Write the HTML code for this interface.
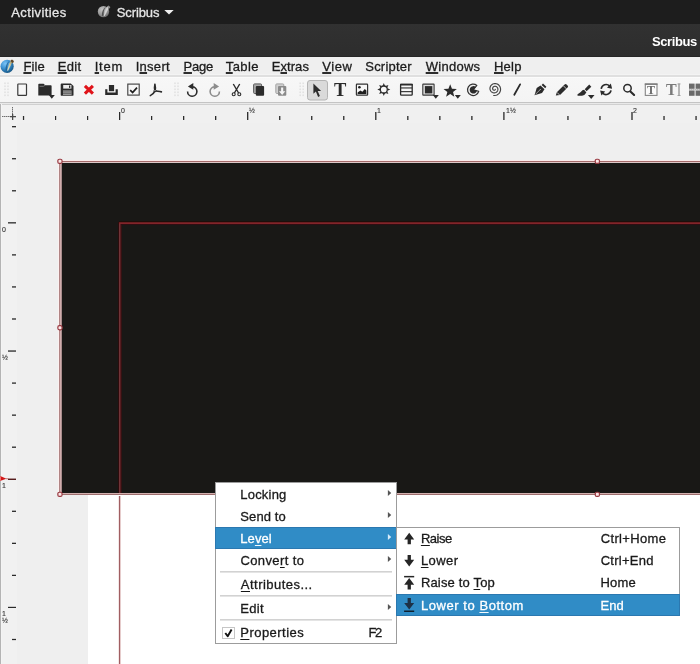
<!DOCTYPE html>
<html lang="en"><head><meta charset="utf-8"><title>Scribus</title>
<style>
html,body{margin:0;padding:0;}
body{width:700px;height:664px;overflow:hidden;position:relative;background:#efefef;font-family:"Liberation Sans", sans-serif;}
#root{position:absolute;left:0;top:0;width:700px;height:664px;overflow:hidden;will-change:transform;}
#root div,#root span,#root svg{position:absolute;}
.ti{font-family:"Liberation Serif",serif;white-space:pre;}
.t{white-space:pre;line-height:16px;font-family:"Liberation Sans", sans-serif;-webkit-text-stroke:0.3px currentColor;}
.t.rl{-webkit-text-stroke:0.12px currentColor;}
.t.b{-webkit-text-stroke:0;}
.t u{text-decoration:underline;text-decoration-thickness:2px;text-underline-offset:1px;text-decoration-skip-ink:none;text-decoration-color:rgba(10,10,10,.85);}
.t.m u{text-decoration-thickness:1px;text-underline-offset:1.5px;text-decoration-color:rgba(10,10,10,.95);}
.t.w u{text-decoration-thickness:1px;text-underline-offset:1.5px;text-decoration-color:rgba(255,255,255,.95);}
</style></head>
<body><div id="root">
<div style="left:0px;top:0px;width:700px;height:664px;background:#efefef;"></div>
<div style="left:0px;top:0px;width:700px;height:24px;background:#1d1d1d;"></div>
<div style="left:0px;top:24px;width:700px;height:33px;background:#2f2f2f;background:linear-gradient(#313131,#2d2d2d);"></div>
<div style="left:0px;top:56px;width:700px;height:1px;background:#262626;"></div>
<div style="left:0px;top:57px;width:700px;height:19px;background:#efefef;"></div>
<div style="left:0px;top:74px;width:700px;height:1px;background:#f3f3f3;"></div>
<div style="left:0px;top:75px;width:700px;height:2px;background:#dfdfdf;"></div>
<div style="left:0px;top:77px;width:700px;height:25px;background:#f6f6f6;background:linear-gradient(#f7f7f7,#f4f4f4);"></div>
<div style="left:0px;top:77px;width:700px;height:1px;background:#fbfbfb;"></div>
<div style="left:0px;top:102px;width:700px;height:1px;background:#c4c4c4;"></div>
<div style="left:0px;top:103px;width:700px;height:1px;background:#e9e9e9;"></div>
<div style="left:0px;top:104px;width:700px;height:1px;background:#d0d0d0;"></div>
<div style="left:0px;top:105px;width:700px;height:18px;background:#f0f0f0;"></div>
<div style="left:0px;top:105px;width:17px;height:559px;background:#f1f1f1;"></div>
<div style="left:0px;top:104px;width:1px;height:560px;background:#b4b4b4;"></div>
<div style="left:1px;top:104px;width:1px;height:560px;background:#f4f4f4;"></div>
<span class="t " style="left:11.27px;top:5.00px;font-size:13px;color:#e6e6e6;font-weight:400;letter-spacing:0.399px">Activities</span>
<span class="t " style="left:116.75px;top:5.00px;font-size:13px;color:#e6e6e6;font-weight:400;letter-spacing:-0.114px">Scribus</span>
<svg style="left:163px;top:9px" width="12" height="7" viewBox="0 0 12 7"><path d="M1.3 1 L10.7 1 L6 5.6 Z" fill="#f0f0f0"/></svg>
<svg style="left:96px;top:4px" width="16" height="16" viewBox="96 4 16 16">
<defs><radialGradient id="gi" cx=".38" cy=".32" r=".8"><stop offset="0" stop-color="#c4c4c4"/><stop offset=".55" stop-color="#9a9a9a"/><stop offset="1" stop-color="#5c5c5c"/></radialGradient></defs>
<circle cx="103.5" cy="11.6" r="5.7" fill="url(#gi)"/>
<path d="M101.9 15.8 C101.6 12.4 103 9 105.8 6.8 C104 9.6 103.4 12.6 103.6 15.9 Z" fill="#3c3c3c" opacity=".8"/>
<path d="M103.6 15.9 L105.6 9.6 L107.4 6.4 L109 7.2 L108 9.8 L104.6 16 Z" fill="#d2d2d2"/>
<path d="M107 6.4 L108.6 5.5 L110.3 6.9 L109.9 8.2 L108.8 8.5 Z" fill="#8e8e8e"/>
</svg>
<span class="t b" style="left:652.06px;top:34.00px;font-size:13px;color:#ffffff;font-weight:700;letter-spacing:-0.418px">Scribus</span>
<svg style="left:0px;top:56px" width="20" height="20" viewBox="0 56 20 20">
<defs><radialGradient id="lg" cx=".36" cy=".3" r=".78"><stop offset="0" stop-color="#7cc4f6"/><stop offset=".45" stop-color="#3f94d4"/><stop offset=".8" stop-color="#1f679c"/><stop offset="1" stop-color="#164e78"/></radialGradient>
<linearGradient id="pg" x1="0" y1="1" x2="1" y2="0"><stop offset="0" stop-color="#e8e6d0"/><stop offset=".6" stop-color="#cfc79a"/><stop offset="1" stop-color="#8a7a4a"/></linearGradient></defs>
<circle cx="7.1" cy="66.3" r="6.6" fill="url(#lg)"/>
<path d="M5.6 70.6 C5.2 66.6 6.6 62.8 9.6 60.8 C7.6 63.6 7 66.8 7.2 70.6 Z" fill="#1a5a8c" opacity=".75"/>
<path d="M7.1 70.6 L9.3 63.4 L10.9 60.6 L12.4 61.4 L11.4 64 L8.1 70.8 Z" fill="url(#pg)"/>
<path d="M10.5 60.5 L12 59.5 L13.9 61 L13.5 62.6 L12.2 62.9 Z" fill="#5e4424"/>
</svg>
<span class="t " style="left:23.39px;top:59.00px;font-size:13px;color:#1c1c1c;font-weight:400;letter-spacing:0.154px"><u>F</u>ile</span>
<span class="t " style="left:57.69px;top:59.00px;font-size:13px;color:#1c1c1c;font-weight:400;letter-spacing:0.373px"><u>E</u>dit</span>
<span class="t " style="left:94.64px;top:59.00px;font-size:13px;color:#1c1c1c;font-weight:400;letter-spacing:0.809px"><u>I</u>tem</span>
<span class="t " style="left:135.64px;top:59.00px;font-size:13px;color:#1c1c1c;font-weight:400;letter-spacing:0.293px">I<u>n</u>sert</span>
<span class="t " style="left:183.49px;top:59.00px;font-size:13px;color:#1c1c1c;font-weight:400;letter-spacing:-0.215px"><u>P</u>age</span>
<span class="t " style="left:225.84px;top:59.00px;font-size:13px;color:#1c1c1c;font-weight:400;letter-spacing:0.376px"><u>T</u>able</span>
<span class="t " style="left:271.69px;top:59.00px;font-size:13px;color:#1c1c1c;font-weight:400;letter-spacing:0.078px">E<u>x</u>tras</span>
<span class="t " style="left:322.25px;top:59.00px;font-size:13px;color:#1c1c1c;font-weight:400;letter-spacing:0.535px"><u>V</u>iew</span>
<span class="t " style="left:365.25px;top:59.00px;font-size:13px;color:#1c1c1c;font-weight:400;letter-spacing:0.213px">Scripter</span>
<span class="t " style="left:425.71px;top:59.00px;font-size:13px;color:#1c1c1c;font-weight:400;letter-spacing:0.262px"><u>W</u>indows</span>
<span class="t " style="left:493.99px;top:59.00px;font-size:13px;color:#1c1c1c;font-weight:400;letter-spacing:0.207px"><u>H</u>elp</span>
<svg style="left:0;top:76px" width="700" height="28" viewBox="0 76 700 28"><rect x="4.2" y="82.5" width="1.6" height="1.6" fill="#e2e2e2"/><rect x="7.2" y="82.5" width="1.6" height="1.6" fill="#e2e2e2"/><rect x="4.2" y="85.5" width="1.6" height="1.6" fill="#e2e2e2"/><rect x="7.2" y="85.5" width="1.6" height="1.6" fill="#e2e2e2"/><rect x="4.2" y="88.5" width="1.6" height="1.6" fill="#e2e2e2"/><rect x="7.2" y="88.5" width="1.6" height="1.6" fill="#e2e2e2"/><rect x="4.2" y="91.5" width="1.6" height="1.6" fill="#e2e2e2"/><rect x="7.2" y="91.5" width="1.6" height="1.6" fill="#e2e2e2"/><rect x="4.2" y="94.5" width="1.6" height="1.6" fill="#e2e2e2"/><rect x="7.2" y="94.5" width="1.6" height="1.6" fill="#e2e2e2"/><rect x="174.2" y="82.5" width="1.6" height="1.6" fill="#e2e2e2"/><rect x="177.2" y="82.5" width="1.6" height="1.6" fill="#e2e2e2"/><rect x="174.2" y="85.5" width="1.6" height="1.6" fill="#e2e2e2"/><rect x="177.2" y="85.5" width="1.6" height="1.6" fill="#e2e2e2"/><rect x="174.2" y="88.5" width="1.6" height="1.6" fill="#e2e2e2"/><rect x="177.2" y="88.5" width="1.6" height="1.6" fill="#e2e2e2"/><rect x="174.2" y="91.5" width="1.6" height="1.6" fill="#e2e2e2"/><rect x="177.2" y="91.5" width="1.6" height="1.6" fill="#e2e2e2"/><rect x="174.2" y="94.5" width="1.6" height="1.6" fill="#e2e2e2"/><rect x="177.2" y="94.5" width="1.6" height="1.6" fill="#e2e2e2"/><rect x="299.4" y="82.5" width="1.6" height="1.6" fill="#e2e2e2"/><rect x="302.4" y="82.5" width="1.6" height="1.6" fill="#e2e2e2"/><rect x="299.4" y="85.5" width="1.6" height="1.6" fill="#e2e2e2"/><rect x="302.4" y="85.5" width="1.6" height="1.6" fill="#e2e2e2"/><rect x="299.4" y="88.5" width="1.6" height="1.6" fill="#e2e2e2"/><rect x="302.4" y="88.5" width="1.6" height="1.6" fill="#e2e2e2"/><rect x="299.4" y="91.5" width="1.6" height="1.6" fill="#e2e2e2"/><rect x="302.4" y="91.5" width="1.6" height="1.6" fill="#e2e2e2"/><rect x="299.4" y="94.5" width="1.6" height="1.6" fill="#e2e2e2"/><rect x="302.4" y="94.5" width="1.6" height="1.6" fill="#e2e2e2"/><rect x="17.8" y="84" width="8.7" height="11.4" rx=".6" fill="#f7f7f7" stroke="#3a3a3a" stroke-width="1.2"/><path d="M38.3 84.6 Q38.3 83.8 39.1 83.8 L43.6 83.8 L45.2 85.2 L50.8 85.2 Q51.6 85.2 51.6 86 L51.6 95.5 L38.3 95.5 Z" fill="#2b2b2b"/><path d="M39.6 86.3 L43.4 86.3 L45 85.3" fill="none" stroke="#8a8a8a" stroke-width=".8"/><path d="M48.8 95.1 L54.8 95.1 L51.8 98.7 Z" fill="#2b2b2b"/><path d="M61.6 83.5 L70.8 83.5 L73.5 86 L73.5 94.9 Q73.5 95.8 72.6 95.8 L61.6 95.8 Q60.7 95.8 60.7 94.9 L60.7 84.4 Q60.7 83.5 61.6 83.5 Z" fill="#2b2b2b"/><rect x="63.2" y="85" width="8.2" height="3.6" fill="#e9e9e9"/><rect x="69" y="85.5" width="1.3" height="2.4" fill="#2b2b2b"/><rect x="63" y="90.4" width="8.6" height="4.6" fill="#9a9a9a"/><rect x="63" y="91.6" width="8.6" height=".7" fill="#5a5a5a"/><rect x="63" y="93.2" width="8.6" height=".7" fill="#5a5a5a"/><path d="M84.9 85.9 L92.9 93.7 M92.9 85.9 L84.9 93.7" stroke="#e0141a" stroke-width="3.1" stroke-linecap="butt" fill="none"/><rect x="108.9" y="85" width="5.2" height="6.2" fill="#2b2b2b"/><path d="M105.2 89.2 L107.4 89.2 L107.4 92.6 L115.6 92.6 L115.6 89.2 L117.8 89.2 L117.8 94.9 L105.2 94.9 Z" fill="#2b2b2b"/><rect x="127.8" y="84.1" width="11.4" height="11" fill="#f7f7f7" stroke="#444" stroke-width="1.15"/><path d="M130.2 90.2 L132.6 92.6 L137 87.6" fill="none" stroke="#1e1e1e" stroke-width="1.7"/><path d="M154.9 84.2 C155.6 87 155.6 89 155 90.8 C154 93 152.4 94.6 150.3 95.6 M155 90.8 C157 91.2 159 91.4 161.4 91.9 M155 90.8 C154.4 88.6 154.4 86.4 154.9 84.2" fill="none" stroke="#2b2b2b" stroke-width="1.6" stroke-linecap="round"/><circle cx="155" cy="90.7" r="1.5" fill="#2b2b2b"/><circle cx="155" cy="90.6" r=".6" fill="#ddd"/><path d="M192.6 86.9 A4.65 4.65 0 1 1 187.6 91.4" fill="none" stroke="#2b2b2b" stroke-width="1.6"/><path d="M187.9 86.4 L193.3 83 L193.3 89.8 Z" fill="#2b2b2b"/><path d="M214.4 86.9 A4.65 4.65 0 1 0 219.4 91.4" fill="none" stroke="#8c8c8c" stroke-width="1.6"/><path d="M219.1 86.4 L213.7 83 L213.7 89.8 Z" fill="#8c8c8c"/><path d="M233.3 84 L238.6 93 M239.7 84 L234.4 93" stroke="#2b2b2b" stroke-width="1.4" fill="none"/><circle cx="233.7" cy="94.2" r="1.5" fill="none" stroke="#2b2b2b" stroke-width="1.1"/><circle cx="239.3" cy="94.2" r="1.5" fill="none" stroke="#2b2b2b" stroke-width="1.1"/><rect x="253.6" y="83.9" width="8" height="9.6" rx="1" fill="#a8a8a8" stroke="#5c5c5c" stroke-width="1"/><rect x="255.8" y="86" width="8.3" height="9.7" rx="1" fill="#2b2b2b"/><rect x="275.8" y="83.9" width="8" height="9.6" rx="1" fill="#cfcfcf" stroke="#a4a4a4" stroke-width="1"/><rect x="278" y="86" width="8.3" height="9.7" rx="1" fill="#8a8a8a"/><path d="M281.1 87.6 L283.2 87.6 L283.2 91.2 L285.3 91.2 L282.15 94.9 L279 91.2 L281.1 91.2 Z" fill="#f4f4f4"/><rect x="307.5" y="80.5" width="20" height="19.5" rx="2.5" fill="#dadada" stroke="#b4b4b4" stroke-width="1"/><path d="M313.4 83.4 L313.4 93.8 L315.9 91.6 L318.1 96.9 L319.9 96.1 L317.7 90.9 L321.1 90.9 Z" fill="#2b2b2b"/><rect x="356.4" y="84.1" width="11.2" height="11.1" rx=".6" fill="#f7f7f7" stroke="#333" stroke-width="1.2"/><circle cx="359.4" cy="87.2" r="1.3" fill="#1e1e1e"/><path d="M357.6 94 L357.6 92.6 L360.4 90.4 L362.4 91.8 L364.8 89 L366.4 90.6 L366.4 94 Z" fill="#1e1e1e"/><path d="M385.05 85.90 L383.80 83.00 L382.55 85.90 Z M387.23 87.84 L388.40 84.90 L385.46 86.07 Z M387.40 90.75 L390.30 89.50 L387.40 88.25 Z M385.46 92.93 L388.40 94.10 L387.23 91.16 Z M382.55 93.10 L383.80 96.00 L385.05 93.10 Z M380.37 91.16 L379.20 94.10 L382.14 92.93 Z M380.20 88.25 L377.30 89.50 L380.20 90.75 Z M382.14 86.07 L379.20 84.90 L380.37 87.84 Z " fill="#2b2b2b"/><circle cx="383.8" cy="89.5" r="3.5" fill="#f7f7f7" stroke="#2b2b2b" stroke-width="1.3"/><rect x="400.6" y="84.4" width="11.6" height="10.8" rx=".8" fill="#f7f7f7" stroke="#2b2b2b" stroke-width="1.3"/><rect x="400" y="83.8" width="12.8" height="1.7" fill="#2b2b2b"/><rect x="400.6" y="87.4" width="11.6" height="1.1" fill="#2b2b2b"/><rect x="400.6" y="91.1" width="11.6" height="1.1" fill="#2b2b2b"/><rect x="422.8" y="84.1" width="11.3" height="11" rx=".4" fill="#dcdcdc" stroke="#3a3a3a" stroke-width="1.1"/><rect x="424.9" y="86.1" width="7.4" height="7.3" fill="#2b2b2b"/><path d="M432.8 95.1 L438.8 95.1 L435.8 98.7 Z" fill="#2b2b2b"/><path d="M450.20 84.24 L451.96 88.72 L456.86 88.98 L453.05 92.01 L454.31 96.65 L450.20 94.04 L446.09 96.65 L447.35 92.01 L443.54 88.98 L448.44 88.72 Z" fill="#2b2b2b"/><path d="M454.8 95.1 L460.8 95.1 L457.8 98.7 Z" fill="#2b2b2b"/><path d="M473.2 89.8 L478.71 91.28 A5.7 5.7 0 1 1 476.86 85.43 Z" fill="#f0f0f0" stroke="#333" stroke-width="1.2" stroke-linejoin="round"/><path d="M473.4 89.8 L476.97 90.76 A3.7 3.7 0 1 1 475.78 86.97 Z" fill="#2b2b2b"/><path d="M493.67 95.53 L494.82 95.52 L495.94 95.31 L497.00 94.92 L497.96 94.36 L498.80 93.64 L499.49 92.80 L500.02 91.87 L500.38 90.87 L500.56 89.83 L500.56 88.80 L500.38 87.79 L500.04 86.84 L499.54 85.97 L498.90 85.21 L498.16 84.58 L497.33 84.10 L496.44 83.77 L495.51 83.61 L494.59 83.60 L493.69 83.75 L492.85 84.06 L492.08 84.49 L491.40 85.05 L490.85 85.70 L490.42 86.44 L490.12 87.22 L489.97 88.03 L489.97 88.84 L490.10 89.62 L490.36 90.36 L490.74 91.03 L491.22 91.62 L491.78 92.11 L492.42 92.48 L493.09 92.73 L493.79 92.86 L494.48 92.87 L495.16 92.76 L495.79 92.53 L496.36 92.21 L496.86 91.80 L497.27 91.32 L497.58 90.79 L497.79 90.22 L497.90 89.63 L497.90 89.05 L497.81 88.49 L497.62 87.97 L497.35 87.49 L497.01 87.09 L496.61 86.75 L496.17 86.50 L495.70 86.34 L495.23 86.26 L494.76 86.26 L494.31 86.35 L493.90 86.50 L493.53 86.73 L493.22 87.00 L492.96 87.32 L492.78 87.67 L492.66 88.03 L492.61 88.39 L492.63 88.75 L492.70 89.08 L492.83 89.39 L493.01 89.65 L493.22 89.87 L493.46 90.04 L493.72 90.16 L493.98 90.23 L494.24 90.24 L494.48 90.21 L494.70 90.14 L494.89 90.03 L495.05 89.90 L495.18 89.74 L495.26 89.58 L495.31 89.41 L495.32 89.25" fill="none" stroke="#444" stroke-width="1.15" stroke-linecap="round"/><path d="M514.3 94.8 L520.1 84.4" stroke="#2b2b2b" stroke-width="1.8" stroke-linecap="round"/><path d="M534.5 95.3 L536.7 88 L540.5 85.5 L544.5 89.3 L542 93 Z" fill="#2b2b2b"/><path d="M541.6 84.9 L543 83.6 L546.4 86.8 L545.2 88.2 Z" fill="#2b2b2b"/><path d="M535.4 94.4 L540.2 89.6" stroke="#d0d0d0" stroke-width=".7"/><circle cx="540.3" cy="89.5" r=".6" fill="#bdbdbd"/><path d="M555.8 95.6 L556.8 92.2 L564.6 84.6 Q565.6 83.6 566.6 84.6 L567.6 85.6 Q568.6 86.6 567.6 87.6 L560 95 Z" fill="#2b2b2b"/><path d="M563.6 86 L566.6 89 M557 92.4 L559.6 95" stroke="#e4e4e4" stroke-width=".8"/><path d="M589.2 84.6 L591.3 86.7 L586.6 91.3 L584.7 89.2 Z" fill="#2b2b2b"/><path d="M584.1 89.7 L586.4 92.6 Q585.2 95.2 582 95.7 L577.9 95.7 Q576.4 95 578 93.9 Q580.8 92.6 582.4 90.3 Z" fill="#2b2b2b"/><path d="M587.9 95.1 L594.5 95.1 L591.2 98.9 Z" fill="#2b2b2b"/><path d="M601.2 88.8 A5 5 0 0 1 609.6 86" fill="none" stroke="#2b2b2b" stroke-width="1.6"/><path d="M611 90.4 A5 5 0 0 1 602.6 93.2" fill="none" stroke="#2b2b2b" stroke-width="1.6"/><path d="M610.8 83.6 L612.1 88.7 L607 87.7 Z" fill="#2b2b2b"/><path d="M601.4 95.6 L600.1 90.5 L605.2 91.5 Z" fill="#2b2b2b"/><circle cx="627.5" cy="88.2" r="3.7" fill="none" stroke="#2b2b2b" stroke-width="1.5"/><path d="M630.4 91.4 L634.1 95" stroke="#2b2b2b" stroke-width="2.1" stroke-linecap="round"/><rect x="645.3" y="84" width="11.7" height="11.4" fill="#fbfbfb" stroke="#858585" stroke-width="1.1"/><rect x="644.8" y="83.5" width="12.7" height="1.4" fill="#7c7c7c"/><rect x="678.4" y="83.6" width="1.2" height="12.2" fill="#8c8c8c"/><rect x="677.5" y="83.5" width="3" height=".9" fill="#9a9a9a"/><rect x="677.5" y="95" width="3" height=".9" fill="#9a9a9a"/><rect x="689" y="83.6" width="5.6" height="5.2" fill="#6a6a6a"/><rect x="695.6" y="83.6" width="5" height="5.2" fill="#6a6a6a"/><rect x="689" y="90.5" width="5.6" height="5.3" fill="#6a6a6a"/><rect x="695.6" y="90.5" width="5" height="5.3" fill="#6a6a6a"/><path d="M689.4 89.7 L700 89.7" stroke="#7a7a7a" stroke-width="1" stroke-dasharray="1 1"/></svg>
<span class="ti" style="left:333.9px;top:79.5px;font-size:18.5px;line-height:20px;color:#2b2b2b;font-weight:700">T</span>
<span class="ti" style="left:647.1px;top:83px;font-size:12px;line-height:14px;color:#6a6a6a;font-weight:700">T</span>
<span class="ti" style="left:665.9px;top:81px;font-size:16px;line-height:17px;color:#7a7a7a;font-weight:700">T</span>
<div style="left:22px;top:116px;width:1px;height:4px;background:rgba(42,42,42,0.10);"></div>
<div style="left:23px;top:116px;width:1px;height:4px;background:rgba(42,42,42,1.00);"></div>
<div style="left:24px;top:116px;width:1px;height:4px;background:rgba(42,42,42,0.16);"></div>
<div style="left:55px;top:116px;width:1px;height:4px;background:rgba(42,42,42,1.00);"></div>
<div style="left:56px;top:116px;width:1px;height:4px;background:rgba(42,42,42,0.18);"></div>
<div style="left:87px;top:116px;width:1px;height:4px;background:rgba(42,42,42,1.00);"></div>
<div style="left:88px;top:116px;width:1px;height:4px;background:rgba(42,42,42,0.21);"></div>
<div style="left:119px;top:112px;width:1px;height:8px;background:rgba(42,42,42,1.00);"></div>
<div style="left:120px;top:112px;width:1px;height:8px;background:rgba(42,42,42,0.24);"></div>
<div style="left:151px;top:116px;width:1px;height:4px;background:rgba(42,42,42,1.00);"></div>
<div style="left:152px;top:116px;width:1px;height:4px;background:rgba(42,42,42,0.26);"></div>
<div style="left:183px;top:116px;width:1px;height:4px;background:rgba(42,42,42,1.00);"></div>
<div style="left:184px;top:116px;width:1px;height:4px;background:rgba(42,42,42,0.29);"></div>
<div style="left:215px;top:116px;width:1px;height:4px;background:rgba(42,42,42,1.00);"></div>
<div style="left:216px;top:116px;width:1px;height:4px;background:rgba(42,42,42,0.31);"></div>
<div style="left:247px;top:112px;width:1px;height:8px;background:rgba(42,42,42,0.97);"></div>
<div style="left:248px;top:112px;width:1px;height:8px;background:rgba(42,42,42,0.34);"></div>
<div style="left:279px;top:116px;width:1px;height:4px;background:rgba(42,42,42,0.94);"></div>
<div style="left:280px;top:116px;width:1px;height:4px;background:rgba(42,42,42,0.37);"></div>
<div style="left:311px;top:116px;width:1px;height:4px;background:rgba(42,42,42,0.92);"></div>
<div style="left:312px;top:116px;width:1px;height:4px;background:rgba(42,42,42,0.39);"></div>
<div style="left:343px;top:116px;width:1px;height:4px;background:rgba(42,42,42,0.89);"></div>
<div style="left:344px;top:116px;width:1px;height:4px;background:rgba(42,42,42,0.42);"></div>
<div style="left:375px;top:112px;width:1px;height:8px;background:rgba(42,42,42,0.87);"></div>
<div style="left:376px;top:112px;width:1px;height:8px;background:rgba(42,42,42,0.45);"></div>
<div style="left:407px;top:116px;width:1px;height:4px;background:rgba(42,42,42,0.84);"></div>
<div style="left:408px;top:116px;width:1px;height:4px;background:rgba(42,42,42,0.47);"></div>
<div style="left:439px;top:116px;width:1px;height:4px;background:rgba(42,42,42,0.81);"></div>
<div style="left:440px;top:116px;width:1px;height:4px;background:rgba(42,42,42,0.50);"></div>
<div style="left:471px;top:116px;width:1px;height:4px;background:rgba(42,42,42,0.79);"></div>
<div style="left:472px;top:116px;width:1px;height:4px;background:rgba(42,42,42,0.53);"></div>
<div style="left:503px;top:112px;width:1px;height:8px;background:rgba(42,42,42,0.76);"></div>
<div style="left:504px;top:112px;width:1px;height:8px;background:rgba(42,42,42,0.55);"></div>
<div style="left:535px;top:116px;width:1px;height:4px;background:rgba(42,42,42,0.74);"></div>
<div style="left:536px;top:116px;width:1px;height:4px;background:rgba(42,42,42,0.58);"></div>
<div style="left:567px;top:116px;width:1px;height:4px;background:rgba(42,42,42,0.71);"></div>
<div style="left:568px;top:116px;width:1px;height:4px;background:rgba(42,42,42,0.60);"></div>
<div style="left:599px;top:116px;width:1px;height:4px;background:rgba(42,42,42,0.68);"></div>
<div style="left:600px;top:116px;width:1px;height:4px;background:rgba(42,42,42,0.63);"></div>
<div style="left:631px;top:112px;width:1px;height:8px;background:rgba(42,42,42,0.66);"></div>
<div style="left:632px;top:112px;width:1px;height:8px;background:rgba(42,42,42,0.66);"></div>
<div style="left:663px;top:116px;width:1px;height:4px;background:rgba(42,42,42,0.63);"></div>
<div style="left:664px;top:116px;width:1px;height:4px;background:rgba(42,42,42,0.68);"></div>
<div style="left:695px;top:116px;width:1px;height:4px;background:rgba(42,42,42,0.60);"></div>
<div style="left:696px;top:116px;width:1px;height:4px;background:rgba(42,42,42,0.71);"></div>
<span class="t rl" style="left:121px;top:107px;font-size:7px;line-height:7px;color:#333">0</span>
<span class="t rl" style="left:249px;top:107px;font-size:7px;line-height:7px;color:#333">½</span>
<span class="t rl" style="left:377px;top:107px;font-size:7px;line-height:7px;color:#333">1</span>
<span class="t rl" style="left:506px;top:107px;font-size:7px;line-height:7px;color:#333">1½</span>
<span class="t rl" style="left:633px;top:107px;font-size:7px;line-height:7px;color:#333">2</span>
<div style="left:12px;top:126px;width:4px;height:1px;background:rgba(42,42,42,0.98);"></div>
<div style="left:12px;top:127px;width:4px;height:1px;background:rgba(42,42,42,0.33);"></div>
<div style="left:12px;top:158px;width:4px;height:1px;background:rgba(42,42,42,0.93);"></div>
<div style="left:12px;top:159px;width:4px;height:1px;background:rgba(42,42,42,0.38);"></div>
<div style="left:12px;top:190px;width:4px;height:1px;background:rgba(42,42,42,0.88);"></div>
<div style="left:12px;top:191px;width:4px;height:1px;background:rgba(42,42,42,0.44);"></div>
<div style="left:8px;top:222px;width:8px;height:1px;background:rgba(42,42,42,0.82);"></div>
<div style="left:8px;top:223px;width:8px;height:1px;background:rgba(42,42,42,0.49);"></div>
<div style="left:12px;top:254px;width:4px;height:1px;background:rgba(42,42,42,0.77);"></div>
<div style="left:12px;top:255px;width:4px;height:1px;background:rgba(42,42,42,0.54);"></div>
<div style="left:12px;top:286px;width:4px;height:1px;background:rgba(42,42,42,0.72);"></div>
<div style="left:12px;top:287px;width:4px;height:1px;background:rgba(42,42,42,0.59);"></div>
<div style="left:12px;top:318px;width:4px;height:1px;background:rgba(42,42,42,0.67);"></div>
<div style="left:12px;top:319px;width:4px;height:1px;background:rgba(42,42,42,0.65);"></div>
<div style="left:8px;top:350px;width:8px;height:1px;background:rgba(42,42,42,0.61);"></div>
<div style="left:8px;top:351px;width:8px;height:1px;background:rgba(42,42,42,0.70);"></div>
<div style="left:12px;top:382px;width:4px;height:1px;background:rgba(42,42,42,0.56);"></div>
<div style="left:12px;top:383px;width:4px;height:1px;background:rgba(42,42,42,0.75);"></div>
<div style="left:12px;top:414px;width:4px;height:1px;background:rgba(42,42,42,0.51);"></div>
<div style="left:12px;top:415px;width:4px;height:1px;background:rgba(42,42,42,0.80);"></div>
<div style="left:12px;top:446px;width:4px;height:1px;background:rgba(42,42,42,0.46);"></div>
<div style="left:12px;top:447px;width:4px;height:1px;background:rgba(42,42,42,0.86);"></div>
<div style="left:8px;top:478px;width:8px;height:1px;background:rgba(70,8,8,0.40);"></div>
<div style="left:8px;top:479px;width:8px;height:1px;background:rgba(70,8,8,0.91);"></div>
<div style="left:12px;top:510px;width:4px;height:1px;background:rgba(42,42,42,0.35);"></div>
<div style="left:12px;top:511px;width:4px;height:1px;background:rgba(42,42,42,0.96);"></div>
<div style="left:12px;top:542px;width:4px;height:1px;background:rgba(42,42,42,0.30);"></div>
<div style="left:12px;top:543px;width:4px;height:1px;background:rgba(42,42,42,1.00);"></div>
<div style="left:12px;top:574px;width:4px;height:1px;background:rgba(42,42,42,0.25);"></div>
<div style="left:12px;top:575px;width:4px;height:1px;background:rgba(42,42,42,1.00);"></div>
<div style="left:8px;top:606px;width:8px;height:1px;background:rgba(42,42,42,0.19);"></div>
<div style="left:8px;top:607px;width:8px;height:1px;background:rgba(42,42,42,1.00);"></div>
<div style="left:12px;top:638px;width:4px;height:1px;background:rgba(42,42,42,0.14);"></div>
<div style="left:12px;top:639px;width:4px;height:1px;background:rgba(42,42,42,1.00);"></div>
<div style="left:12px;top:640px;width:4px;height:1px;background:rgba(42,42,42,0.12);"></div>
<span class="t rl" style="left:2px;top:226px;font-size:7px;line-height:7px;color:#333">0</span>
<span class="t rl" style="left:2px;top:354px;font-size:7px;line-height:7px;color:#333">½</span>
<span class="t rl" style="left:2px;top:482px;font-size:7px;line-height:7px;color:#333">1</span>
<span class="t rl" style="left:2px;top:610px;font-size:7px;line-height:7px;color:#333">1</span>
<span class="t rl" style="left:2px;top:617px;font-size:7px;line-height:7px;color:#333">½</span>
<div style="left:12px;top:107px;width:1px;height:13px;background:#9a9a9a;background:repeating-linear-gradient(#6e6e6e 0 1px,#b4b4b4 1px 2px);"></div>
<div style="left:2px;top:116px;width:14px;height:1px;background:#9a9a9a;background:repeating-linear-gradient(90deg,#6e6e6e 0 1px,#b4b4b4 1px 2px);"></div>
<div style="left:12px;top:114px;width:1px;height:6px;background:#4a4a4a;"></div>
<div style="left:10px;top:116px;width:6px;height:1px;background:#4a4a4a;"></div>
<div style="left:13px;top:114px;width:1px;height:6px;background:rgba(60,60,60,.25);"></div>
<div style="left:10px;top:117px;width:6px;height:1px;background:rgba(60,60,60,.25);"></div>
<svg style="left:0px;top:473px" width="18" height="12" viewBox="0 0 18 12"><path d="M0 3.3 L1.4 3.5 L6.4 5.7 L1.4 7.5 L0 7.7 Z" fill="#cf1616"/><path d="M0 3.3 L0 7.7 L1 7.6 L1 3.4 Z" fill="#f07070"/><rect x="6" y="5.3" width="2.2" height=".9" fill="rgba(150,20,20,.6)"/></svg>
<div style="left:88px;top:191px;width:612px;height:473px;background:#ffffff;"></div>
<div style="left:58px;top:160px;width:642px;height:1px;background:#fbeaea;"></div>
<div style="left:58px;top:161px;width:1px;height:334px;background:#fbf0f0;"></div>
<div style="left:59px;top:161px;width:641px;height:334px;background:#c8a0a0;"></div>
<div style="left:59px;top:161px;width:641px;height:1px;background:#a46a6a;"></div>
<div style="left:60px;top:162px;width:640px;height:1px;background:#dec8c8;"></div>
<div style="left:59px;top:162px;width:1px;height:333px;background:#b08484;"></div>
<div style="left:60px;top:162px;width:1px;height:332px;background:#d0acac;"></div>
<div style="left:61px;top:163px;width:1px;height:330px;background:#a88c8c;"></div>
<div style="left:60px;top:493px;width:640px;height:1px;background:#d2b0ae;"></div>
<div style="left:59px;top:494px;width:641px;height:1px;background:#9e6e6e;"></div>
<div style="left:62px;top:163px;width:638px;height:330px;background:#191816;"></div>
<div style="left:118px;top:222px;width:1px;height:271px;background:#2c0c0c;"></div>
<div style="left:121px;top:224px;width:1px;height:269px;background:#321212;"></div>
<div style="left:119px;top:223px;width:1px;height:270px;background:#703438;"></div>
<div style="left:120px;top:223px;width:1px;height:270px;background:#561c20;"></div>
<div style="left:119px;top:221px;width:581px;height:1px;background:#1e0e0a;"></div>
<div style="left:121px;top:224px;width:579px;height:1px;background:#2e0e12;"></div>
<div style="left:119px;top:222px;width:581px;height:1px;background:#6a1e20;"></div>
<div style="left:119px;top:223px;width:581px;height:1px;background:#82242a;"></div>
<div style="left:119px;top:496px;width:1px;height:168px;background:#a05e62;"></div>
<div style="left:120px;top:496px;width:1px;height:168px;background:#e6cccc;"></div>
<div style="left:118px;top:496px;width:1px;height:168px;background:#f4e6e6;"></div>
<svg style="left:55px;top:157px" width="11" height="10" viewBox="0 0 11 10"><rect x="2.85" y="2.25" width="4.2" height="4.2" rx="1.5" fill="#fbe6e6" stroke="#983840" stroke-width="1.2"/></svg>
<svg style="left:592px;top:157px" width="11" height="10" viewBox="0 0 11 10"><rect x="3.25" y="2.25" width="4.2" height="4.2" rx="1.5" fill="#fbe6e6" stroke="#983840" stroke-width="1.2"/></svg>
<svg style="left:55px;top:323px" width="11" height="10" viewBox="0 0 11 10"><rect x="2.85" y="2.65" width="4.2" height="4.2" rx="1.5" fill="#fbe6e6" stroke="#983840" stroke-width="1.2"/></svg>
<svg style="left:55px;top:490px" width="11" height="10" viewBox="0 0 11 10"><rect x="2.85" y="2.25" width="4.2" height="4.2" rx="1.5" fill="#fbe6e6" stroke="#983840" stroke-width="1.2"/></svg>
<svg style="left:592px;top:490px" width="11" height="10" viewBox="0 0 11 10"><rect x="3.25" y="2.25" width="4.2" height="4.2" rx="1.5" fill="#fbe6e6" stroke="#983840" stroke-width="1.2"/></svg>
<div style="left:215px;top:482px;width:182px;height:162px;background:#9c9c9c;"></div>
<div style="left:216px;top:483px;width:180px;height:160px;background:#ffffff;"></div>
<div style="left:215px;top:527px;width:182px;height:22px;background:#308cc6;box-sizing:border-box;border:1px solid #2b78b0;"></div>
<div style="left:220px;top:571px;width:172px;height:1px;background:#d2d2d2;"></div>
<div style="left:220px;top:572px;width:172px;height:1px;background:#e4e4e4;"></div>
<div style="left:220px;top:595px;width:172px;height:1px;background:#d2d2d2;"></div>
<div style="left:220px;top:596px;width:172px;height:1px;background:#e4e4e4;"></div>
<div style="left:220px;top:619px;width:172px;height:1px;background:#d2d2d2;"></div>
<div style="left:220px;top:620px;width:172px;height:1px;background:#e4e4e4;"></div>
<span class="t " style="left:240.29px;top:487.00px;font-size:13px;color:#1a1a1a;font-weight:400;letter-spacing:0.200px">Locking</span>
<svg style="left:387px;top:489px" width="6" height="8" viewBox="0 0 6 8"><path d="M0.9 1 L4.2 4 L0.9 7 Z" fill="#555"/></svg>
<span class="t " style="left:240.35px;top:509.00px;font-size:13px;color:#1a1a1a;font-weight:400;letter-spacing:0.093px">Send to</span>
<svg style="left:387px;top:511px" width="6" height="8" viewBox="0 0 6 8"><path d="M0.9 1 L4.2 4 L0.9 7 Z" fill="#555"/></svg>
<span class="t w" style="left:240.29px;top:531.00px;font-size:13px;color:#ffffff;font-weight:400;letter-spacing:0.062px">Le<u>v</u>el</span>
<svg style="left:387px;top:533px" width="6" height="8" viewBox="0 0 6 8"><path d="M0.9 1 L4.2 4 L0.9 7 Z" fill="#d8ecfa"/></svg>
<span class="t m" style="left:240.51px;top:553.00px;font-size:13px;color:#1a1a1a;font-weight:400;letter-spacing:0.378px">Conve<u>r</u>t to</span>
<svg style="left:387px;top:555px" width="6" height="8" viewBox="0 0 6 8"><path d="M0.9 1 L4.2 4 L0.9 7 Z" fill="#555"/></svg>
<span class="t m" style="left:240.87px;top:577.00px;font-size:13px;color:#1a1a1a;font-weight:400;letter-spacing:0.468px"><u>A</u>ttributes...</span>
<span class="t " style="left:240.29px;top:601.00px;font-size:13px;color:#1a1a1a;font-weight:400;letter-spacing:0.273px">Edit</span>
<svg style="left:387px;top:603px" width="6" height="8" viewBox="0 0 6 8"><path d="M0.9 1 L4.2 4 L0.9 7 Z" fill="#555"/></svg>
<span class="t m" style="left:240.29px;top:625.00px;font-size:13px;color:#1a1a1a;font-weight:400;letter-spacing:0.464px"><u>P</u>roperties</span>
<span class="t " style="left:368.49px;top:625.00px;font-size:13px;color:#1a1a1a;font-weight:400;letter-spacing:-1.429px">F2</span>
<svg style="left:221px;top:626px" width="15" height="14" viewBox="0 0 15 14"><rect x="1.5" y="1.5" width="12" height="11" fill="#fff" stroke="#c6c6c6" stroke-width="1"/><path d="M4.3 7 L6.7 10.2 L10.6 3.6" fill="none" stroke="#111" stroke-width="1.9" stroke-linejoin="round"/></svg>
<div style="left:396px;top:527px;width:284px;height:90px;background:#9c9c9c;"></div>
<div style="left:397px;top:528px;width:282px;height:89px;background:#ffffff;"></div>
<div style="left:396px;top:594px;width:284px;height:22px;background:#308cc6;box-sizing:border-box;border:1px solid #2b78b0;"></div>
<div style="left:397px;top:616px;width:283px;height:1px;background:#ffffff;"></div>
<div style="left:396px;top:616px;width:1px;height:28px;background:#9c9c9c;"></div>
<svg style="left:0;top:0" width="700" height="664" viewBox="0 0 700 664"><path d="M409.2 532.8 L414.2 539.5 L410.9 539.5 L410.9 544.3 L407.6 544.3 L407.6 539.5 L404.2 539.5 Z" fill="#262626"/></svg>
<svg style="left:0;top:0" width="700" height="664" viewBox="0 0 700 664"><path d="M409.2 566.4 L414.2 559.8 L410.9 559.8 L410.9 554.9 L407.6 554.9 L407.6 559.8 L404.2 559.8 Z" fill="#262626"/></svg>
<svg style="left:0;top:0" width="700" height="664" viewBox="0 0 700 664"><path d="M409.2 578.1 L414.2 584.8000000000001 L410.9 584.8000000000001 L410.9 589.6 L407.6 589.6 L407.6 584.8000000000001 L404.2 584.8000000000001 Z" fill="#262626"/><rect x="404.1" y="575.9" width="10.1" height="1.5" fill="#262626"/></svg>
<svg style="left:0;top:0" width="700" height="664" viewBox="0 0 700 664"><path d="M409.2 609.6 L414.2 603.0 L410.9 603.0 L410.9 598.1 L407.6 598.1 L407.6 603.0 L404.2 603.0 Z" fill="#1d3146"/><rect x="404.1" y="610.5" width="10.1" height="1.5" fill="#10202e"/></svg>
<span class="t m" style="left:420.89px;top:531.00px;font-size:13px;color:#1a1a1a;font-weight:400;letter-spacing:-0.445px"><u>R</u>aise</span>
<span class="t m" style="left:420.89px;top:553.00px;font-size:13px;color:#1a1a1a;font-weight:400;letter-spacing:0.417px"><u>L</u>ower</span>
<span class="t m" style="left:420.89px;top:575.00px;font-size:13px;color:#1a1a1a;font-weight:400;letter-spacing:0.174px">Raise to <u>T</u>op</span>
<span class="t w" style="left:420.89px;top:598.00px;font-size:13px;color:#ffffff;font-weight:400;letter-spacing:0.561px">Lower to <u>B</u>ottom</span>
<span class="t " style="left:600.71px;top:531.00px;font-size:13px;color:#1a1a1a;font-weight:400;letter-spacing:0.353px">Ctrl+Home</span>
<span class="t " style="left:600.71px;top:553.00px;font-size:13px;color:#1a1a1a;font-weight:400;letter-spacing:0.247px">Ctrl+End</span>
<span class="t " style="left:600.49px;top:575.00px;font-size:13px;color:#1a1a1a;font-weight:400;letter-spacing:0.220px">Home</span>
<span class="t " style="left:600.49px;top:598.00px;font-size:13px;color:#ffffff;font-weight:400;letter-spacing:0.031px">End</span>
</div></body></html>
